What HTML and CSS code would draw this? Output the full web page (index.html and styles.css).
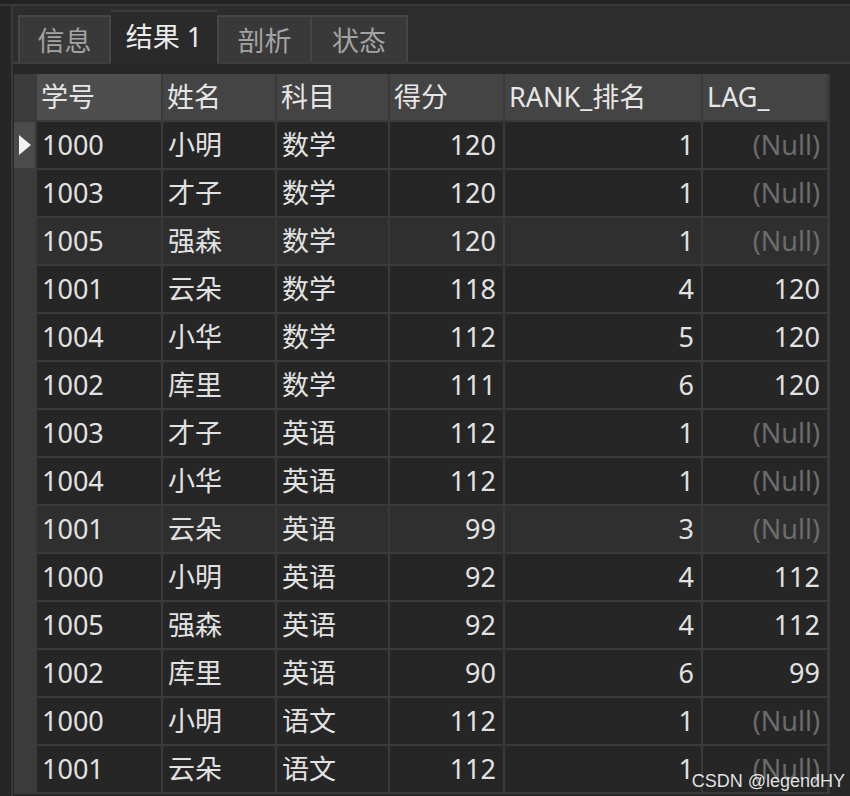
FILE: index.html
```html
<!DOCTYPE html>
<html lang="zh">
    <head>
        <meta charset="utf-8">
        <title>结果 1</title>
        <link rel="stylesheet" href="styles.css">
    </head>

    <body>
        <div class="topBar"></div>
        <div class="frame">
            <div class="leftEdge"></div>
            <div class="mainContainer">
                <div class="tabBar">
                    <div class="tab tabInfo">信息</div>
                    <div class="tab tabActive">结果 1</div>
                    <div class="tab tabProfile">剖析</div>
                    <div class="tab tabStatus">状态</div>
                </div>
                <div class="gridPanel">
                    <div class="dataGrid">
                        <div class="corner"></div>
                        <div class="headCell headSorted">学号</div>
                        <div class="headCell">姓名</div>
                        <div class="headCell">科目</div>
                        <div class="headCell">得分</div>
                        <div class="headCell">RANK_排名</div>
                        <div class="headCell">LAG_</div>

                        <div class="rowMark rowCurrent"><svg width="12" height="20" viewBox="0 0 12 20"><polygon points="0,0 12,10 0,20" fill="#f2f2f2"/></svg></div>
                        <div class="cell">1000</div><div class="cell">小明</div><div class="cell">数学</div><div class="cell num">120</div><div class="cell num">1</div><div class="cell num null">(Null)</div>

                        <div class="rowMark"></div>
                        <div class="cell">1003</div><div class="cell">才子</div><div class="cell">数学</div><div class="cell num">120</div><div class="cell num">1</div><div class="cell num null">(Null)</div>

                        <div class="rowMark"></div>
                        <div class="cell lit">1005</div><div class="cell lit">强森</div><div class="cell lit">数学</div><div class="cell lit num">120</div><div class="cell lit num">1</div><div class="cell lit num null">(Null)</div>

                        <div class="rowMark"></div>
                        <div class="cell">1001</div><div class="cell">云朵</div><div class="cell">数学</div><div class="cell num">118</div><div class="cell num">4</div><div class="cell num">120</div>

                        <div class="rowMark"></div>
                        <div class="cell">1004</div><div class="cell">小华</div><div class="cell">数学</div><div class="cell num">112</div><div class="cell num">5</div><div class="cell num">120</div>

                        <div class="rowMark"></div>
                        <div class="cell">1002</div><div class="cell">库里</div><div class="cell">数学</div><div class="cell num">111</div><div class="cell num">6</div><div class="cell num">120</div>

                        <div class="rowMark"></div>
                        <div class="cell">1003</div><div class="cell">才子</div><div class="cell">英语</div><div class="cell num">112</div><div class="cell num">1</div><div class="cell num null">(Null)</div>

                        <div class="rowMark"></div>
                        <div class="cell">1004</div><div class="cell">小华</div><div class="cell">英语</div><div class="cell num">112</div><div class="cell num">1</div><div class="cell num null">(Null)</div>

                        <div class="rowMark"></div>
                        <div class="cell lit">1001</div><div class="cell lit">云朵</div><div class="cell lit">英语</div><div class="cell lit num">99</div><div class="cell lit num">3</div><div class="cell lit num null">(Null)</div>

                        <div class="rowMark"></div>
                        <div class="cell">1000</div><div class="cell">小明</div><div class="cell">英语</div><div class="cell num">92</div><div class="cell num">4</div><div class="cell num">112</div>

                        <div class="rowMark"></div>
                        <div class="cell">1005</div><div class="cell">强森</div><div class="cell">英语</div><div class="cell num">92</div><div class="cell num">4</div><div class="cell num">112</div>

                        <div class="rowMark"></div>
                        <div class="cell">1002</div><div class="cell">库里</div><div class="cell">英语</div><div class="cell num">90</div><div class="cell num">6</div><div class="cell num">99</div>

                        <div class="rowMark"></div>
                        <div class="cell">1000</div><div class="cell">小明</div><div class="cell">语文</div><div class="cell num">112</div><div class="cell num">1</div><div class="cell num null">(Null)</div>

                        <div class="rowMark"></div>
                        <div class="cell">1001</div><div class="cell">云朵</div><div class="cell">语文</div><div class="cell num">112</div><div class="cell num">1</div><div class="cell num null">(Null)</div>
                    </div>
                </div>
            </div>
        </div>
        <div class="watermark">CSDN @legendHY</div>
    </body>
</html>
```

FILE: styles.css
```css
* {
    margin: 0;
    padding: 0;
    box-sizing: border-box;
}
html, body{
    width: 850px;
    height: 796px;
    overflow: hidden;
    background-color: #2d2d2d;
    font-family: 'Noto Sans', 'Noto Sans CJK SC', sans-serif;
    color: #e2e2e2;
}
body{
    position: relative;
}
.topBar{
    height: 6px;
    background-color: #232323;
    border-bottom: 2px solid #393939;
}
.frame{
    display: flex;
    height: 790px;
}
.leftEdge{
    width: 13px;
    background-color: #262626;
    border-right: 2px solid #393939;
}
.mainContainer{
    flex: 1;
    display: flex;
    flex-direction: column;
}
.tabBar{
    display: flex;
    align-items: flex-end;
    height: 58px;
    padding-left: 5px;
    border-bottom: 2px solid #3d3d3d;
}
.tab{
    height: 47px;
    line-height: 47px;
    font-size: 27px;
    color: #a3a3a3;
    text-align: center;
    background-color: #393939;
    border: 2px solid #464646;
    border-bottom: 0;
}
.tabInfo{
    width: 93px;
}
.tabActive{
    width: 106px;
    height: 54px;
    line-height: 50px;
    color: #ececec;
    background-color: #2a2a2a;
    border-color: #3c3c3c;
    border-left: 0;
    border-right: 0;
    margin-bottom: -2px;
}
.tabProfile{
    width: 93px;
    border-right: 0;
}
.tabStatus{
    width: 98px;
}
.gridPanel{
    flex: 1;
    background-color: #272727;
    padding-top: 10px;
    padding-left: 1px;
}
.dataGrid{
    display: grid;
    grid-template-columns: 21px 124px 112px 111px 113px 196px 124px;
    grid-auto-rows: 46px;
    gap: 2px;
    width: 816px;
    padding-right: 2px;
    padding-bottom: 2px;
    background-color: #3a3a3a;
}
.corner{
    background-color: #3c3c3c;
}
.headCell{
    background-color: #444444;
    font-size: 27px;
    line-height: 46px;
    padding-left: 4px;
    color: #e6e6e6;
    white-space: nowrap;
}
.headSorted{
    background-color: #4e4e4e;
}
.rowMark{
    background-color: #3c3c3c;
    display: flex;
    align-items: center;
    justify-content: center;
}
.rowCurrent{
    background-color: #4b4b4b;
}
.cell{
    background-color: #262626;
    font-size: 27px;
    line-height: 46px;
    padding: 0 7px 0 5px;
    white-space: nowrap;
}
.lit{
    background-color: #2f2f2f;
}
.num{
    text-align: right;
}
.null{
    color: #6c6c6c;
}
.watermark{
    position: absolute;
    right: 5px;
    bottom: 4px;
    font-family: 'Liberation Sans', sans-serif;
    font-size: 18px;
    color: rgba(255, 255, 255, 0.88);
}
```
